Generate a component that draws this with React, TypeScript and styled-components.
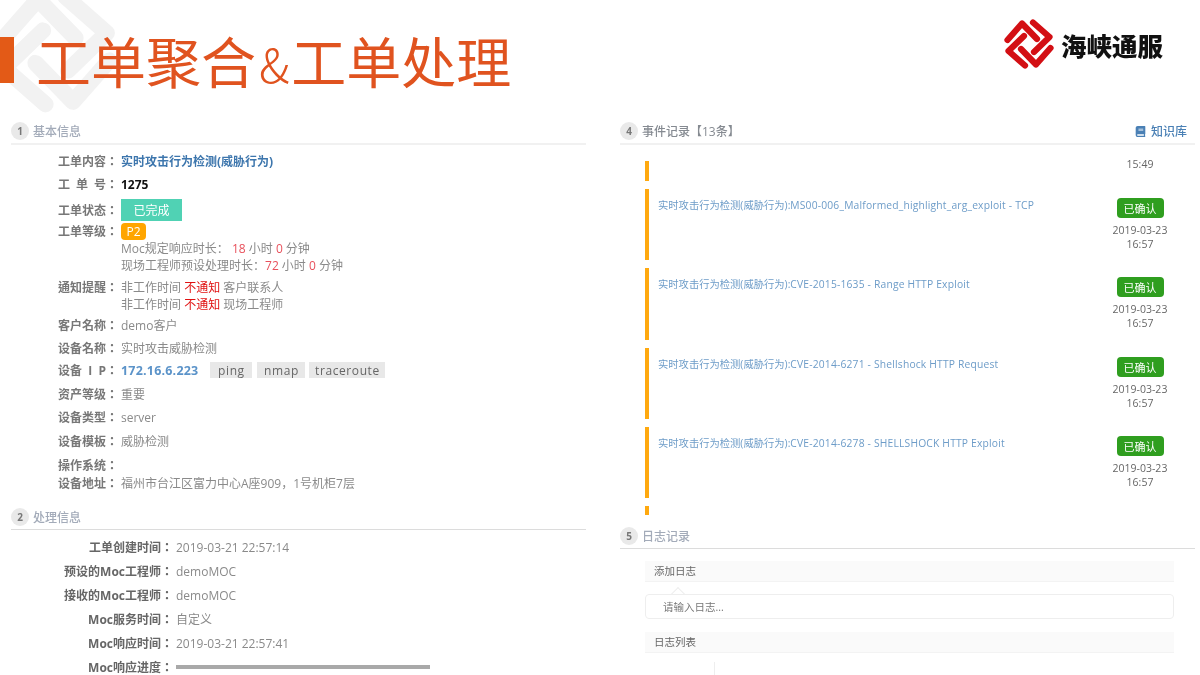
import React from "react";
import styled, { createGlobalStyle } from "styled-components";
import { FaBook } from "react-icons/fa";

const Global = createGlobalStyle`
  html, body { margin: 0; padding: 0; background: #fff; }
  body { font-family: "Open Sans", "Noto Sans CJK SC", sans-serif; font-size: 12px; color: #888; }
`;

const Page = styled.div`
  position: relative;
  width: 1200px;
  height: 675px;
  overflow: hidden;
  background: #fff;
`;
const Watermark = styled.svg`
  position: absolute;
  left: -17px;
  top: -22px;
  width: 150px;
  height: 150px;
`;
const Header = styled.header`
  position: relative;
  display: flex;
  align-items: flex-start;
  height: 122px;
  padding-right: 37px;
`;
const Accent = styled.div`
  width: 14px;
  height: 46px;
  margin-top: 37px;
  background: #e35a17;
`;
const Title = styled.h1`
  flex: 1;
  margin: 26px 0 0 22px;
  font: 400 55px/66px "Noto Sans CJK SC", sans-serif;
  color: #e0531f;
  filter: blur(0.3px);
  white-space: nowrap;
`;
const Amp = styled.span`
  margin: 0 2px 0 3px;
  font: 300 47px/66px "Noto Sans CJK SC", sans-serif;
`;
const Logo = styled.div`
  display: flex;
  align-items: flex-start;
  gap: 1px;
  margin-top: 15px;
  filter: blur(0.4px);
`;
const LogoName = styled.div`
  margin-top: 15px;
  font: 900 25.5px/30px "Noto Sans CJK SC", sans-serif;
  color: #111;
`;
const Columns = styled.div`
  position: relative;
  display: grid;
  grid-template-columns: 575px 575px;
  column-gap: 34px;
  padding-left: 11px;
  filter: blur(0.4px);
`;
const Column = styled.div`
  display: flex;
  flex-direction: column;
`;
const SectionHead = styled.div<{ $top?: number; $soft?: boolean }>`
  display: flex;
  align-items: center;
  gap: 4px;
  margin-top: ${(p) => p.$top ?? 0}px;
  padding-bottom: 3px;
  border-bottom: ${(p) => (p.$soft ? "2px solid #f1f1f1" : "1px solid #dcdcdc")};
`;
const Circle = styled.span`
  display: flex;
  align-items: center;
  justify-content: center;
  width: 18px;
  height: 18px;
  border-radius: 50%;
  background: #e9e9e9;
  color: #777;
  font-size: 10px;
  font-weight: 700;
`;
const SectionName = styled.span<{ $dark?: boolean }>`
  flex: 1;
  font-size: 12px;
  font-weight: 500;
  color: ${(p) => (p.$dark ? "#858a91" : "#a3abb9")};
`;
const KnowledgeLink = styled.span`
  display: flex;
  align-items: center;
  gap: 5px;
  margin-right: 8px;
  font-size: 12px;
  font-weight: 500;
  color: #4a80b5;
  svg { width: 11px; height: 11px; }
`;
const Rows = styled.div<{ $top: number }>`
  display: flex;
  flex-direction: column;
  margin-top: ${(p) => p.$top}px;
`;
const Row = styled.div<{ $h: number }>`
  display: flex;
  align-items: center;
  height: ${(p) => p.$h}px;
  padding-left: 47px;
`;
const Label = styled.span`
  flex: none;
  width: 63px;
  font: 700 12px "Open Sans", "Noto Sans CJK TC", sans-serif;
  color: #777;
  white-space: pre;
`;
const Spread = styled.span`
  letter-spacing: 6px;
`;
const Value = styled.span<{ $tone?: "link" | "strong" | "ip" }>`
  font-size: ${(p) => (p.$tone === "ip" ? 12.5 : 12)}px;
  letter-spacing: ${(p) => (p.$tone === "ip" ? 0.2 : 0)}px;
  white-space: pre;
  font-weight: ${(p) => (p.$tone ? 700 : 400)};
  color: ${(p) =>
    p.$tone === "link" ? "#3d76ad" : p.$tone === "strong" ? "#111" : p.$tone === "ip" ? "#5b93c9" : "#8a8a8a"};
`;
const Status = styled.span`
  display: flex;
  align-items: center;
  justify-content: center;
  width: 61px;
  height: 22px;
  background: #50d2b4;
  color: #fff;
  font-size: 12px;
`;
const Level = styled.span`
  display: flex;
  align-items: center;
  justify-content: center;
  width: 25px;
  height: 17px;
  border-radius: 4px;
  background: #ffa500;
  color: #fff;
  font-size: 12px;
`;
const Block = styled.div<{ $top?: number }>`
  display: flex;
  align-items: flex-start;
  margin-top: ${(p) => p.$top ?? 0}px;
  padding-left: 47px;
`;
const Stack = styled.div`
  display: flex;
  flex-direction: column;
`;
const Line = styled.div`
  height: 17px;
  font-size: 12px;
  line-height: 17px;
  color: #8a8a8a;
  white-space: pre;
`;
const LabelLine = styled(Label)`
  line-height: 17px;
`;
const Red = styled.span`
  color: #e8505b;
`;
const Alert = styled.span`
  color: #e01010;
`;
const Tool = styled.span<{ $w: number; $left: number }>`
  display: flex;
  align-items: center;
  justify-content: center;
  width: ${(p) => p.$w}px;
  height: 16px;
  margin-left: ${(p) => p.$left}px;
  background: #e8e8e8;
  color: #666;
  font-size: 12px;
  letter-spacing: 0.6px;
`;
const WideRow = styled.div`
  display: flex;
  align-items: center;
  height: 24px;
`;
const WideLabel = styled.span`
  flex: none;
  width: 162px;
  margin-right: 3px;
  text-align: right;
  font: 700 12px "Open Sans", "Noto Sans CJK TC", sans-serif;
  color: #666;
  white-space: pre;
`;
const Progress = styled.div`
  width: 254px;
  height: 4px;
  background: #a9a9a9;
`;
const Events = styled.div`
  display: flex;
  flex-direction: column;
  gap: 8px;
  margin: 16px 0 0 25px;
  width: 544px;
`;
const Event = styled.div<{ $h: number }>`
  display: flex;
  justify-content: space-between;
  height: ${(p) => p.$h}px;
  padding: 9px 1px 0 9px;
  border-left: 4px solid #ffa90f;
  box-sizing: border-box;
`;
const EventTitle = styled.div`
  font-size: 10.3px;
  line-height: 14px;
  color: #6d9cc8;
  white-space: pre;
`;
const EventCode = styled.span`
  letter-spacing: 0.18px;
`;
const EventSide = styled.div`
  display: flex;
  flex-direction: column;
  align-items: center;
  width: 96px;
`;
const Confirmed = styled.span`
  display: flex;
  align-items: center;
  justify-content: center;
  width: 47px;
  height: 20px;
  margin-bottom: 5px;
  border-radius: 4px;
  background: #2f9e1f;
  color: #fff;
  font-size: 11px;
`;
const Stamp = styled.div<{ $pull?: boolean }>`
  margin-top: ${(p) => (p.$pull ? -13 : 0)}px;
  font-size: 10.5px;
  line-height: 14px;
  color: #666;
`;
const LogArea = styled.div`
  display: flex;
  flex-direction: column;
  width: 529px;
  margin: 12px 0 0 25px;
`;
const LogBar = styled.div<{ $top?: number }>`
  height: 21px;
  margin-top: ${(p) => p.$top ?? 0}px;
  padding-left: 9px;
  box-sizing: border-box;
  background: #fafafa;
  border-bottom: 1px solid #f3f3f3;
  font-size: 10.5px;
  line-height: 21px;
  color: #666;
`;
const InputWrap = styled.div`
  position: relative;
  margin-top: 12px;
  &::before {
    content: "";
    position: absolute;
    left: 28px;
    top: -5px;
    width: 9px;
    height: 9px;
    background: #fff;
    border-left: 1px solid #eee;
    border-top: 1px solid #eee;
    transform: rotate(45deg);
  }
`;
const LogInput = styled.input`
  display: block;
  width: 100%;
  height: 25px;
  padding: 0 0 0 17px;
  box-sizing: border-box;
  border: 1px solid #eee;
  border-radius: 4px;
  background: transparent;
  position: relative;
  font: 10.5px "Open Sans", "Noto Sans CJK SC", sans-serif;
  outline: none;
  &::placeholder { color: #777; opacity: 1; }
`;
const Tick = styled.div`
  width: 1px;
  height: 14px;
  margin: 9px 0 0 69px;
  background: #eee;
`;

const LogoMark = ({ color, width }: { color: string; width: number }) => (
  <g fill="none" stroke={color} strokeWidth={width} strokeLinejoin="round" strokeLinecap="round">
    {[0, 90, 180, 270].map((a) => (
      <path key={a} d="M37 24 L22 8.5 L7.5 25" transform={`rotate(${a} 29 29)`} />
    ))}
  </g>
);

const PREFIX = "实时攻击行为检测(威胁行为):";
const events = [
  "MS00-006_Malformed_highlight_arg_exploit - TCP",
  "CVE-2015-1635 - Range HTTP Exploit",
  "CVE-2014-6271 - Shellshock HTTP Request",
  "CVE-2014-6278 - SHELLSHOCK HTTP Exploit",
];

export default function App() {
  return (
    <Page>
      <Global />
      <Watermark viewBox="0 0 60 60">
        <LogoMark color="#f2f2f2" width={6.5} />
      </Watermark>
      <Header>
        <Accent />
        <Title>工单聚合<Amp>&amp;</Amp>工单处理</Title>
        <Logo>
          <svg width="60" height="60" viewBox="0 0 60 60">
            <LogoMark color="#d30f14" width={6.2} />
          </svg>
          <LogoName>海峡通服</LogoName>
        </Logo>
      </Header>
      <Columns>
        <Column>
          <SectionHead $soft>
            <Circle>1</Circle>
            <SectionName>基本信息</SectionName>
          </SectionHead>
          <Rows $top={5}>
            <Row $h={22}><Label>工单内容：</Label><Value $tone="link">实时攻击行为检测(威胁行为)</Value></Row>
            <Row $h={24}><Label><Spread>工单</Spread>号：</Label><Value $tone="strong">1275</Value></Row>
            <Row $h={27}><Label>工单状态：</Label><Status>已完成</Status></Row>
            <Block>
              <LabelLine>工单等级：</LabelLine>
              <Stack>
                <Level>P2</Level>
                <Line>Moc规定响应时长： <Red>18</Red> 小时 <Red>0</Red> 分钟</Line>
                <Line>现场工程师预设处理时长：<Red>72</Red> 小时 <Red>0</Red> 分钟</Line>
              </Stack>
            </Block>
            <Block $top={5}>
              <LabelLine>通知提醒：</LabelLine>
              <Stack>
                <Line>非工作时间 <Alert>不通知</Alert> 客户联系人</Line>
                <Line>非工作时间 <Alert>不通知</Alert> 现场工程师</Line>
              </Stack>
            </Block>
            <Row $h={24}><Label>客户名称：</Label><Value>demo客户</Value></Row>
            <Row $h={22}><Label>设备名称：</Label><Value>实时攻击威胁检测</Value></Row>
            <Row $h={22}>
              <Label>设备  I  P：</Label>
              <Value $tone="ip">172.16.6.223</Value>
              <Tool $w={42} $left={12}>ping</Tool>
              <Tool $w={48} $left={5}>nmap</Tool>
              <Tool $w={76} $left={4}>traceroute</Tool>
            </Row>
            <Row $h={26}><Label>资产等级：</Label><Value>重要</Value></Row>
            <Row $h={20}><Label>设备类型：</Label><Value>server</Value></Row>
            <Row $h={28}><Label>设备模板：</Label><Value>威胁检测</Value></Row>
            <Row $h={20}><Label>操作系统：</Label></Row>
            <Row $h={16}><Label>设备地址：</Label><Value>福州市台江区富力中心A座909，1号机柜7层</Value></Row>
          </Rows>
          <SectionHead $top={17}>
            <Circle>2</Circle>
            <SectionName>处理信息</SectionName>
          </SectionHead>
          <Rows $top={5}>
            <WideRow><WideLabel>工单创建时间：</WideLabel><Value>2019-03-21 22:57:14</Value></WideRow>
            <WideRow><WideLabel>预设的Moc工程师：</WideLabel><Value>demoMOC</Value></WideRow>
            <WideRow><WideLabel>接收的Moc工程师：</WideLabel><Value>demoMOC</Value></WideRow>
            <WideRow><WideLabel>Moc服务时间：</WideLabel><Value>自定义</Value></WideRow>
            <WideRow><WideLabel>Moc响应时间：</WideLabel><Value>2019-03-21 22:57:41</Value></WideRow>
            <WideRow><WideLabel>Moc响应进度：</WideLabel><Progress /></WideRow>
          </Rows>
        </Column>
        <Column>
          <SectionHead $soft>
            <Circle>4</Circle>
            <SectionName $dark>事件记录【13条】</SectionName>
            <KnowledgeLink><FaBook />知识库</KnowledgeLink>
          </SectionHead>
          <Events>
            <Event $h={20}>
              <span />
              <EventSide><Stamp $pull>15:49</Stamp></EventSide>
            </Event>
            {events.map((t) => (
              <Event $h={71.3} key={t}>
                <EventTitle>{PREFIX}<EventCode>{t}</EventCode></EventTitle>
                <EventSide>
                  <Confirmed>已确认</Confirmed>
                  <Stamp>2019-03-23</Stamp>
                  <Stamp>16:57</Stamp>
                </EventSide>
              </Event>
            ))}
            <Event $h={8} />
          </Events>
          <SectionHead $top={12}>
            <Circle>5</Circle>
            <SectionName>日志记录</SectionName>
          </SectionHead>
          <LogArea>
            <LogBar>添加日志</LogBar>
            <InputWrap><LogInput placeholder="请输入日志..." /></InputWrap>
            <LogBar $top={13}>日志列表</LogBar>
            <Tick />
          </LogArea>
        </Column>
      </Columns>
    </Page>
  );
}
